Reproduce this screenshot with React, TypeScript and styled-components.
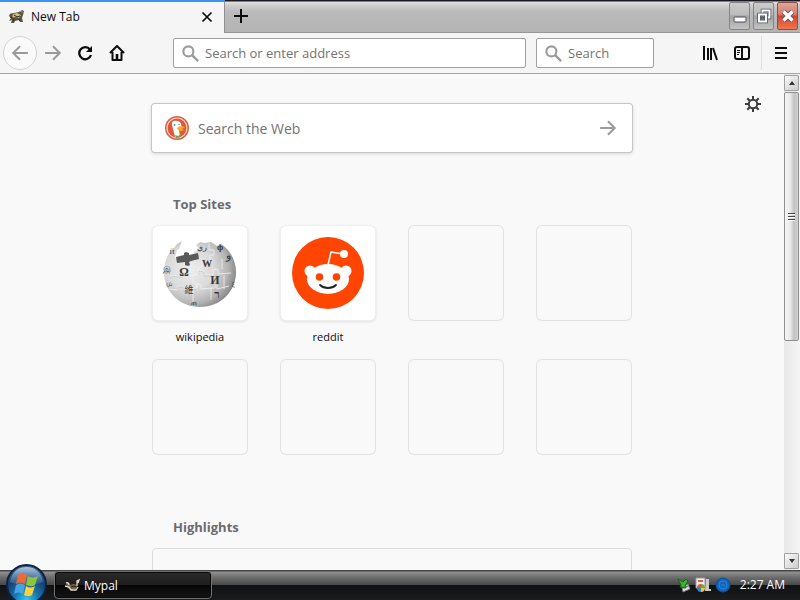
import React from 'react';
import styled, { createGlobalStyle } from 'styled-components';

const GlobalStyle = createGlobalStyle`
  * { box-sizing: border-box; }
  body { margin: 0; overflow: hidden; font-family: "Open Sans", "Noto Sans", sans-serif; font-size: 12px; color: #0c0c0d; }
  button, input { font-family: inherit; margin: 0; padding: 0; }
  svg { display: block; flex: none; }
`;

const Desktop = styled.div`
  display: flex;
  flex-direction: column;
  height: 100vh;
  background: #f9f9f9;
`;

const TitleBar = styled.header`
  display: flex;
  flex: none;
  height: 33px;
  background: linear-gradient(#1c1820 0, #1c1820 1px, #e2e2e2 2px, #cfcfcf 5px, #bababa 12px, #b4b4b4 32px, #969696 32px);
`;

const Tab = styled.div`
  display: flex;
  align-items: center;
  width: 225px;
  padding: 0 9px 2px 8px;
  background: #f5f5f6;
  border-top: 2px solid #3a94f8;
  border-right: 1px solid #8f8f8f;
`;

const TabTitle = styled.span`
  flex: 1;
  margin-left: 6px;
  line-height: 16px;
`;

const PlainButton = styled.button<{ $width?: number }>`
  display: flex;
  align-items: center;
  justify-content: center;
  flex: none;
  width: ${(p) => p.$width ?? 32}px;
  height: 32px;
  border: 0;
  background: transparent;
`;

const WindowControls = styled.div`
  display: flex;
  gap: 3px;
  margin-left: auto;
  padding: 2px 2px 0 0;
`;

const WindowButton = styled.button<{ $close?: boolean }>`
  display: flex;
  align-items: center;
  justify-content: center;
  width: 21px;
  height: 28px;
  border: 1px solid ${(p) => (p.$close ? '#8a5048' : '#858585')};
  border-radius: 2px;
  background: ${(p) =>
    p.$close
      ? 'linear-gradient(#dba79d, #d9796a 45%, #cb4631 50%, #f0764e)'
      : 'linear-gradient(#cccccc, #bcbcbc 45%, #a4a4a4 50%, #c2c2c2)'};
`;

const Toolbar = styled.nav`
  display: flex;
  align-items: center;
  flex: none;
  height: 41px;
  padding: 0 3px;
  background: #f5f5f6;
  border-bottom: 1px solid #a3a3a4;
`;

const BackButton = styled(PlainButton)`
  width: 34px;
  height: 34px;
  border: 1px solid #d2d2d3;
  border-radius: 50%;
  background: #fafafb;
`;

const Fields = styled.div`
  display: flex;
  flex: 1;
  gap: 10px;
  margin: 0 40px;
`;

const Field = styled.label<{ $width?: number }>`
  display: flex;
  align-items: center;
  gap: 6px;
  flex: ${(p) => (p.$width ? `0 0 ${p.$width}px` : '1')};
  min-width: 0;
  height: 30px;
  padding: 0 8px;
  background: #fff;
  border: 1px solid #a0a0a1;
  border-radius: 2px;
`;

const TextInput = styled.input<{ $size: number }>`
  flex: 1;
  min-width: 0;
  border: 0;
  outline: 0;
  background: transparent;
  font-size: ${(p) => p.$size}px;
  color: #0c0c0d;
  &::placeholder { color: #737373; opacity: 1; }
`;

const Separator = styled.span`
  width: 1px;
  height: 34px;
  margin: 0 3px;
  background: #dedee0;
`;

const Viewport = styled.div`
  display: flex;
  flex: 1;
  min-height: 0;
`;

const Page = styled.main`
  position: relative;
  flex: 1;
  overflow: hidden;
`;

const Settings = styled(PlainButton)`
  position: absolute;
  top: 14px;
  right: 15px;
`;

const Column = styled.div`
  width: 480px;
  margin: 0 auto;
  padding-top: 30px;
`;

const WebSearch = styled.form`
  display: flex;
  align-items: center;
  height: 48px;
  padding: 0 8px 0 13px;
  background: #fff;
  border-radius: 3px;
  box-shadow: 0 0 0 1px #c6c6c7, 0 1px 4px rgba(12, 12, 13, 0.2);
`;

const SearchText = styled(TextInput)`
  margin-left: 9px;
`;

const SectionTitle = styled.h2<{ $top: number }>`
  margin: ${(p) => p.$top}px 0 0 21px;
  font-size: 13px;
  line-height: 20px;
  font-weight: 700;
  color: #6b6b6e;
`;

const Sites = styled.ul`
  display: grid;
  grid-template-columns: repeat(4, 96px);
  grid-auto-rows: 96px;
  gap: 38px 32px;
  margin: 11px 0 0;
  padding: 0;
  list-style: none;
`;

const SiteLink = styled.a`
  display: block;
  color: #0c0c0d;
  text-align: center;
  text-decoration: none;
`;

const Tile = styled.div<{ $filled?: boolean }>`
  display: flex;
  align-items: center;
  justify-content: center;
  height: 96px;
  border-radius: 6px;
  background: ${(p) => (p.$filled ? '#fff' : 'transparent')};
  box-shadow: ${(p) =>
    p.$filled
      ? 'inset 0 0 0 1px rgba(12,12,13,.07), 0 1px 3px rgba(12,12,13,.1)'
      : 'inset 0 0 0 1px #e2e2e3'};
`;

const SiteName = styled.span`
  display: block;
  padding-top: 8px;
  font-size: 11px;
  line-height: 16px;
`;

const HighlightCard = styled.article`
  height: 180px;
  margin-top: 11px;
  border: 1px solid #dcdcdd;
  border-radius: 4px;
`;

const ScrollBar = styled.div`
  display: flex;
  flex-direction: column;
  flex: none;
  width: 16px;
  padding: 1px 1px 1px 0;
  background: linear-gradient(90deg, #e8e8e8, #f4f4f4);
`;

const ScrollButton = styled.button`
  display: flex;
  align-items: center;
  justify-content: center;
  height: 16px;
  border: 1px solid #a0a0a0;
  border-radius: 1px;
  background: linear-gradient(135deg, #fafafa, #cccccc);
`;

const ScrollTrack = styled.div`
  flex: 1;
  padding-top: 1px;
`;

const ScrollThumb = styled.div`
  display: flex;
  align-items: center;
  justify-content: center;
  height: 54%;
  border: 1px solid #8f8f8f;
  border-radius: 2px;
  background: linear-gradient(90deg, #f6f6f6, #e9e9e9 40%, #c2c2c2 70%, #d2d2d2);
`;

const TaskBar = styled.footer`
  position: relative;
  display: flex;
  align-items: center;
  flex: none;
  height: 30px;
  padding: 0 15px 0 54px;
  background: linear-gradient(#454545 0, #454545 1px, #929292 2px, #6e6e6e 7px, #484848 15px, #101113 15px, #1b1c1e);
`;

const StartButton = styled.button`
  position: absolute;
  left: 6px;
  bottom: 0;
  width: 41px;
  height: 36px;
  overflow: hidden;
  border: 0;
  background: transparent;
`;

const TaskButton = styled.button`
  display: flex;
  align-items: center;
  gap: 3px;
  width: 158px;
  height: 28px;
  padding: 0 9px;
  border: 1px solid #717171;
  border-radius: 4px;
  background: linear-gradient(#292929, #1f1f1f 50%, #050505 50%, #151515);
  box-shadow: inset 0 0 0 1px #080808;
  color: #fff;
  font-size: 12px;
`;

const Tray = styled.div`
  display: flex;
  align-items: center;
  gap: 4px;
  margin-left: auto;
  color: #fff;
`;

const Clock = styled.time`
  margin-left: 5px;
  font-size: 12px;
  line-height: 16px;
`;

const Stroke = (p: React.SVGProps<SVGSVGElement>) => (
  <svg width="16" height="16" viewBox="0 0 16 16" fill="none" stroke="#0c0c0d" strokeWidth="2" aria-hidden="true" {...p} />
);

const PalIcon = ({ light }: { light?: boolean }) => (
  <svg width="17" height="16" viewBox="0 0 17 16" aria-hidden="true">
    {light ? (
      <>
        <path d="M2 7c0-2 3-2 3 0l2 1c2-2 5-1 6 1l-1 3-6 1-2-2Z" fill="#75684a" />
        <path d="M2 6c1-1 3 0 3 2M1 9l4 1 2 3h5l2-3M13 9V4l2-1-1 3" fill="none" stroke="#e6dcc2" strokeWidth="1.3" />
        <path d="m7 10 3-1 2 1" fill="none" stroke="#1c1a14" />
      </>
    ) : (
      <>
        <path d="M1 7c0-2 2-3 5-3l5-1 3-2 2 1-1 4-1 3 1 4h-3l-1-2-4 1-1 2H3l1-3-3 1 2-3Z" fill="#57553d" />
        <path d="m5 5 4-1 4 2-2 3-4-1-3 1Z" fill="#d2bd7a" />
        <path d="m6 6 3 2 3-1M2 8l3 1M5 12l1-2M12 12l-1-2" fill="none" stroke="#23251c" />
        <path d="m11 3 3-1v2" fill="none" stroke="#b58469" />
      </>
    )}
  </svg>
);

const SearchIcon = () => (
  <Stroke width="17" height="17" stroke="#9a9a9b"><circle cx="6" cy="6" r="4.7" /><path d="m9.5 9.5 5.7 5.7" strokeWidth="2.2" /></Stroke>
);

const ArrowIcon = ({ back, color }: { back?: boolean; color: string }) => (
  <Stroke width="18" height="18" stroke={color} strokeWidth="1.8">
    <path d={back ? 'M15 8H2M8 2 2 8l6 6' : 'M1 8h13M8 2l6 6-6 6'} />
  </Stroke>
);

const DuckIcon = () => (
  <svg width="24" height="24" viewBox="0 0 24 24" aria-hidden="true">
    <circle cx="12" cy="12" r="12" fill="#dc5b3c" />
    <circle cx="12" cy="12" r="10" fill="#e0573a" stroke="#f8d8cd" strokeWidth="1.2" />
    <path d="M7 6c2-2 8-2 9 2l1 4-3 2 1 6-5 1-2-8-1-4Z" fill="#fff" />
    <path d="M12 12c2-2 5-2 8-1l-3 2 2 1c-3 2-6 1-7-2Z" fill="#f5a928" />
    <path d="m10 19 3 1 3-2v3l-5 1Z" fill="#67a653" />
    <circle cx="9.500" cy="9" r=".9" fill="#5582a0" /><circle cx="14" cy="8.500" r=".7" fill="#5582a0" />
  </svg>
);

const WikipediaLogo = () => (
  <svg width="76" height="76" viewBox="0 0 76 76" role="img" aria-label="Wikipedia">
    <defs>
      <radialGradient id="globe" cx=".36" cy=".42" r=".66">
        <stop offset="0" stopColor="#eeeeee" /><stop offset=".5" stopColor="#dadada" /><stop offset=".8" stopColor="#b4b4b4" /><stop offset="1" stopColor="#858585" />
      </radialGradient>
    </defs>
    <path d="M20 6 15 9l-3 4C5 19 2 28 2 37c0 20 16 35 36 35s36-15 36-35c0-12-6-22-15-28l-4 2-6-4-6 1-5-1-4 3 3 4-5 3 1 6-9 2-3-3-3 2-5-1 2-8 2-1Z" fill="url(#globe)" />
    <path d="m14 22 8-2v-2l2-1 3 1v2l9-2 1 6-8 2-2 1 1 3-2 1-3-1v-3l-8 1Z" fill="#5a5a5a" />
    <path d="M8 42c6-4 8 1 13-1v-4h5v4l11-2v-4l5 1v4h9v-5l5-1v5l13-1M7 54l9 1v-4h5v4l13-2 1-4 4 1v4l11-1 1-4 4 1v4l12-3M40 25v7l-4 1 1 5M47 8v7h5v5h-4v8M49 40v8l4 1v4h-4v12M31 40v8l4 1v4h-4v14M60 24v10M62 40v14" fill="none" stroke="#f3f3f3" strokeWidth=".8" />
    <path d="M8 43c6-4 8 1 13-1M37 40v-4l5 1v4h9M16 56v-4h5v4l13-2M50 53l1-4 4 1" fill="none" stroke="#b4b4b4" strokeWidth=".5" />
    <g fill="#373737" fontFamily="Liberation Serif, Noto Sans CJK SC, serif" textAnchor="middle">
      <text x="22" y="41" fontSize="12" fontWeight="700">Ω</text><text x="45" y="32" fontSize="10" fontWeight="700">W</text>
      <text x="53" y="49" fontSize="12" fontWeight="700">И</text><text x="27" y="58" fontSize="9">維</text>
      <text x="55" y="63" fontSize="11" fontWeight="700">ר</text><text x="66" y="24" fontSize="11">و</text>
      <text x="5" y="37" fontSize="8">இ</text><text x="7" y="51" fontSize="8">ம</text>
      <text x="40" y="15" fontSize="8">ري</text><text x="58" y="15" fontSize="9" fontWeight="700">ф</text>
      <text x="32" y="70" fontSize="7">ጠ</text><text x="10" y="19" fontSize="7">Й</text>
      <text x="71" y="51" fontSize="7">ξ</text>
    </g>
  </svg>
);

const RedditLogo = () => (
  <svg width="72" height="72" viewBox="0 0 72 72" role="img" aria-label="Reddit">
    <circle cx="36" cy="36" r="36" fill="#ff4500" />
    <path d="m36 28 3-13 12 2" fill="none" stroke="#fff" strokeWidth="1.600" strokeLinejoin="round" />
    <circle cx="52" cy="17" r="4" fill="#fff" />
    <circle cx="18" cy="34" r="5.5" fill="#fff" /><circle cx="54" cy="34" r="5.5" fill="#fff" />
    <ellipse cx="36" cy="42" rx="21" ry="15" fill="#fff" />
    <circle cx="27.500" cy="40" r="3.8" fill="#ff4500" /><circle cx="44.500" cy="40" r="3.8" fill="#ff4500" />
    <path d="M28 48c4 4 12 4 16 0" fill="none" stroke="#222" strokeWidth="1.800" strokeLinecap="round" />
  </svg>
);

const StartOrb = () => (
  <svg width="41" height="41" viewBox="0 0 41 41" aria-hidden="true">
    <defs>
      <radialGradient id="orb" cx=".5" cy=".9" r=".85">
        <stop offset="0" stopColor="#35c8f5" /><stop offset=".35" stopColor="#1679b5" /><stop offset=".7" stopColor="#17406f" /><stop offset="1" stopColor="#3f648f" />
      </radialGradient>
      <linearGradient id="shine" x2="0" y2="1"><stop stopColor="#c2d6ea" stopOpacity=".85" /><stop offset="1" stopColor="#5f8cb7" stopOpacity=".3" /></linearGradient>
    </defs>
    <circle cx="20.500" cy="20.500" r="19.500" fill="url(#orb)" stroke="#0c2443" strokeWidth="2" />
    <path d="M4 18C6 7 13 3 20.500 3S35 7 37 18c-9 4-23 4-33 0Z" fill="url(#shine)" />
    <path d="M12 11c3-2 6-2 9 0l-2 9c-3-2-6-2-9 0Z" fill="#ed6a33" />
    <path d="M22 12c3 2 6 2 10 0l-3 9c-3 2-6 1-9 0Z" fill="#8cc63f" />
    <path d="M10 21c3-2 6-2 9 0l-2 9c-3-2-6-2-9 0Z" fill="#48a3e4" />
    <path d="M20 22c3 2 6 2 9 0l-3 9c-3 2-6 1-8 0Z" fill="#fdd13c" />
  </svg>
);

const sites = [
  { name: 'wikipedia', logo: <WikipediaLogo /> },
  { name: 'reddit', logo: <RedditLogo /> },
];

export default function App() {
  return (
    <Desktop>
      <GlobalStyle />
      <TitleBar>
        <Tab>
          <PalIcon />
          <TabTitle>New Tab</TabTitle>
          <PlainButton $width={16} aria-label="Close tab">
            <Stroke width="12" height="12" viewBox="0 0 12 12" strokeWidth="1.700"><path d="m1.500 1.500 9 9m0-9-9 9" /></Stroke>
          </PlainButton>
        </Tab>
        <PlainButton aria-label="New tab">
          <Stroke><path d="M8 1v14M1 8h14" /></Stroke>
        </PlainButton>
        <WindowControls>
          <WindowButton aria-label="Minimize">
            <svg width="14" height="18" viewBox="0 0 14 18"><rect x="1" y="10" width="12" height="5" rx="1" fill="#fff" stroke="#4c4f5c" /></svg>
          </WindowButton>
          <WindowButton aria-label="Restore">
            <svg width="16" height="18" viewBox="0 0 16 18" fill="none">
              <path d="M6.500 3.500h7v7h-7z" stroke="#4c5260" strokeWidth="3.500" /><path d="M6.500 3.500h7v7h-7z" stroke="#fff" strokeWidth="2" />
              <path d="M3 7.500h7v7H3z" fill="#999" stroke="#4c5260" strokeWidth="3.500" /><path d="M3 7.500h7v7H3z" stroke="#fff" strokeWidth="2" />
              <path d="M5.500 10h2v2h-2z" stroke="#4c5260" />
            </svg>
          </WindowButton>
          <WindowButton $close aria-label="Close">
            <svg width="16" height="16" viewBox="0 0 16 16"><path d="m3.500 3.500 9 9m0-9-9 9" stroke="#5b4a50" strokeWidth="5" /><path d="m3.500 3.500 9 9m0-9-9 9" stroke="#fff" strokeWidth="3.400" /></svg>
          </WindowButton>
        </WindowControls>
      </TitleBar>

      <Toolbar>
        <BackButton aria-label="Back"><ArrowIcon back color="#9a9a9b" /></BackButton>
        <PlainButton aria-label="Forward"><ArrowIcon color="#9a9a9b" /></PlainButton>
        <PlainButton aria-label="Reload">
          <Stroke strokeWidth="2.3"><path d="M13 4.500A6 6 0 1 0 14 10" /><path d="M15 1v6H9Z" fill="#0c0c0d" stroke="none" /></Stroke>
        </PlainButton>
        <PlainButton aria-label="Home">
          <Stroke strokeLinejoin="round"><path d="m1 8 7-7 7 7M3.500 7v8h9V7" /><path d="M8 9v5" strokeWidth="2.600" /></Stroke>
        </PlainButton>
        <Fields>
          <Field><SearchIcon /><TextInput $size={13} placeholder="Search or enter address" aria-label="Address" /></Field>
          <Field $width={118}><SearchIcon /><TextInput $size={13} placeholder="Search" aria-label="Search" /></Field>
        </Fields>
        <PlainButton aria-label="Library">
          <Stroke><path d="M2 1v14M6 3v12M9 3v12M11 3l4 12" /></Stroke>
        </PlainButton>
        <PlainButton aria-label="Sidebars">
          <Stroke><rect x="1" y="2" width="14" height="12" rx="2" /><path d="M8 2v12" /><path d="M3 5.500h3M3 7.500h3M3 9.500h2" strokeWidth="1" /></Stroke>
        </PlainButton>
        <Separator />
        <PlainButton aria-label="Menu">
          <Stroke><path d="M2 3h12M2 8h12M2 13h12" /></Stroke>
        </PlainButton>
      </Toolbar>

      <Viewport>
        <Page>
          <Settings aria-label="Page settings">
            <Stroke stroke="#3c3c3f"><circle cx="8" cy="8" r="4.200" /><path d="M8 0v4M8 12v4M0 8h4M12 8h4M2.300 2.300l2.700 2.700M11 11l2.700 2.700M13.700 2.300l-2.700 2.700M5 11l-2.700 2.700" /></Stroke>
          </Settings>
          <Column>
            <WebSearch>
              <DuckIcon />
              <SearchText $size={14} placeholder="Search the Web" aria-label="Search the Web" />
              <PlainButton type="button" aria-label="Go"><ArrowIcon color="#9b9b9c" /></PlainButton>
            </WebSearch>
            <SectionTitle $top={42}>Top Sites</SectionTitle>
            <Sites>
              {sites.map((s) => (
                <li key={s.name}>
                  <SiteLink href={`#${s.name}`}><Tile $filled>{s.logo}</Tile><SiteName>{s.name}</SiteName></SiteLink>
                </li>
              ))}
              {Array.from({ length: 6 }, (_, i) => <li key={i}><Tile /></li>)}
            </Sites>
            <SectionTitle $top={62}>Highlights</SectionTitle>
            <HighlightCard />
          </Column>
        </Page>
        <ScrollBar>
          <ScrollButton aria-label="Scroll up"><svg width="6" height="4" viewBox="0 0 6 4"><path d="m0 4 3-4 3 4Z" fill="#333" /></svg></ScrollButton>
          <ScrollTrack>
            <ScrollThumb><svg width="7" height="9" viewBox="0 0 7 9"><path d="M0 1.500h7M0 4.500h7M0 7.500h7" stroke="#444" /><path d="M0 2.500h7M0 5.500h7M0 8.500h7" stroke="#fff" /></svg></ScrollThumb>
          </ScrollTrack>
          <ScrollButton aria-label="Scroll down"><svg width="6" height="4" viewBox="0 0 6 4"><path d="m0 0 3 4 3-4Z" fill="#333" /></svg></ScrollButton>
        </ScrollBar>
      </Viewport>

      <TaskBar>
        <StartButton aria-label="Start"><StartOrb /></StartButton>
        <TaskButton><PalIcon light />Mypal</TaskButton>
        <Tray>
          <svg width="14" height="16" viewBox="0 0 14 16" aria-hidden="true">
            <path d="m5 10 6-3 2 5-7 3Z" fill="#ddd" stroke="#777" /><path d="m6 11 5-2" stroke="#555" /><path d="m1 2 5 3 3-3 2 2-3 5 1 2-6-1 1-2Z" fill="#38b52c" stroke="#16651a" />
          </svg>
          <svg width="16" height="16" viewBox="0 0 16 16" aria-hidden="true">
            <path d="M1 1h9v10H1Z" fill="#eee" stroke="#999" /><path d="M3 4h5" stroke="#d35d50" strokeWidth="2" />
            <path d="M11 2h3v10h2v2h-6Z" fill="#c9c9c9" />
            <path d="M2 11a4 4 0 0 1 4-4v4Z" fill="#e4552c" /><path d="M6 7a4 4 0 0 1 4 4H6Z" fill="#62b43b" /><path d="M2 11h4v4a4 4 0 0 1-4-4Z" fill="#2d84d5" /><path d="M6 11h4a4 4 0 0 1-4 4Z" fill="#f3c52e" />
          </svg>
          <svg width="16" height="16" viewBox="0 0 16 16" aria-hidden="true">
            <circle cx="8" cy="8" r="7" fill="#1265bd" stroke="#0a4d9b" /><circle cx="8" cy="8" r="4" fill="#1265bd" stroke="#2b83d8" /><path d="M6 8h4" stroke="#2b83d8" />
          </svg>
          <Clock>2:27 AM</Clock>
        </Tray>
      </TaskBar>
    </Desktop>
  );
}
